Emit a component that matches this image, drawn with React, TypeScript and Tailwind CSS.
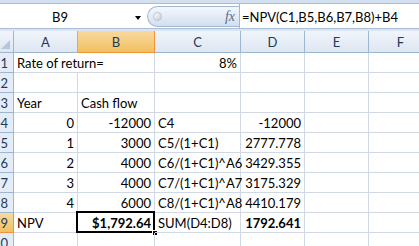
import type { ReactNode } from "react";

type CellDef = {
  text?: ReactNode;
  right?: boolean;
  bold?: boolean;
  span?: boolean;
  selected?: boolean;
};

const COLS = ["A", "B", "C", "D", "E", "F"];

const ROWS: { n: number; cells: CellDef[] }[] = [
  { n: 1, cells: [{ text: "Rate of return=", span: true }, { text: "8%", right: true }, {}, {}, {}] },
  { n: 2, cells: [{}, {}, {}, {}, {}, {}] },
  { n: 3, cells: [{ text: "Year" }, { text: "Cash flow" }, {}, {}, {}, {}] },
  { n: 4, cells: [{ text: "0", right: true }, { text: "-12000", right: true }, { text: "C4" }, { text: "-12000", right: true }, {}, {}] },
  { n: 5, cells: [{ text: "1", right: true }, { text: "3000", right: true }, { text: "C5/(1+C1)" }, { text: "2777.778", right: true }, {}, {}] },
  { n: 6, cells: [{ text: "2", right: true }, { text: "4000", right: true }, { text: "C6/(1+C1)^A6" }, { text: "3429.355", right: true }, {}, {}] },
  { n: 7, cells: [{ text: "3", right: true }, { text: "4000", right: true }, { text: "C7/(1+C1)^A7" }, { text: "3175.329", right: true }, {}, {}] },
  { n: 8, cells: [{ text: "4", right: true }, { text: "6000", right: true }, { text: "C8/(1+C1)^A8" }, { text: "4410.179", right: true }, {}, {}] },
  {
    n: 9,
    cells: [
      { text: "NPV" },
      { text: "$1,792.64", right: true, bold: true, selected: true },
      { text: "SUM(D4:D8)" },
      { text: "1792.641", right: true, bold: true },
      {},
      {},
    ],
  },
  { n: 10, cells: [{}, {}, {}, {}, {}, {}] },
];

function Cell({ c }: { c: CellDef }) {
  return (
    <div
      className={`relative h-[20px] whitespace-nowrap border-b border-r border-[#d0d7e5] px-[3px] text-[13px] leading-[20px] text-black ${
        c.span ? "col-span-2" : ""
      } ${c.right ? "text-right" : "text-left"} ${c.bold ? "font-bold" : ""}`}
    >
      {c.text}
      {c.selected && (
        <>
          <div className="pointer-events-none absolute -left-[2px] -top-[2px] bottom-[-1px] right-[-1px] border-2 border-black" />
          <div className="absolute -bottom-[4px] -right-[4px] h-[6px] w-[6px] border border-white bg-black" />
        </>
      )}
    </div>
  );
}

function RowHeader({ n, active }: { n: number; active: boolean }) {
  return (
    <div
      className={`flex h-[20px] justify-end overflow-hidden border-b border-r pr-[5px] text-[13px] leading-[20px] text-[#1e395b] ${
        active
          ? "border-[#f29436] bg-gradient-to-b from-[#f9d99f] to-[#f1c15f]"
          : "border-[#9eb6ce] bg-[#e4ecf7]"
      }`}
    >
      <span className="whitespace-nowrap">{n}</span>
    </div>
  );
}

export default function App() {
  return (
    <div
      className="h-[246px] w-[419px] overflow-hidden bg-white"
      style={{ fontFamily: "Lato, 'Liberation Sans', sans-serif" }}
    >
      {/* formula bar */}
      <div className="h-[31px] bg-[#dbe5f1]">
        <div className="h-[3px] bg-[#d3e0f0]" />
        <div className="flex h-[26px] border-y border-[#a9bdd6] bg-white">
          <div className="flex w-[147px] items-center pt-[3px]">
            <span className="ml-[52px] text-[13px] text-black">B9</span>
            <span className="ml-auto mr-[6px] h-0 w-0 border-x-[3px] border-t-[4px] border-x-transparent border-t-black" />
          </div>
          <div className="flex h-[21px] w-[92px] items-center self-center rounded-l-full border border-r-0 border-[#a3b7cf] bg-gradient-to-b from-[#f3f7fc] to-[#d2dff0]">
            <span className="ml-[5px] h-[9px] w-[9px] rounded-full border border-[#b9c3cf] bg-gradient-to-br from-white to-[#c6ccd4]" />
            <span
              className="ml-auto mr-[4px] text-[14px] italic text-[#5b6e88]"
              style={{ fontFamily: "'Liberation Serif', serif" }}
            >
              fx
            </span>
          </div>
          <div className="flex flex-1 items-center border-l border-[#a3b7cf] pl-[2px] pt-[3px] text-[13px] text-black">
            =NPV(C1,B5,B6,B7,B8)+B4
          </div>
        </div>
      </div>

      {/* sheet */}
      <div className="grid grid-cols-[14px_64px_77px_86px_64px_64px_64px]">
        <div className="relative h-[22px] border-b border-r border-[#9eb6ce] bg-gradient-to-b from-[#f1f5fb] to-[#dde6f2]">
          <span className="absolute bottom-[3px] right-[3px] h-0 w-0 border-b-[9px] border-l-[9px] border-b-[#b6c6da] border-l-transparent" />
        </div>
        {COLS.map((col) => (
          <div
            key={col}
            className={`h-[22px] border-b border-r text-center text-[13px] leading-[22px] text-[#1e395b] ${
              col === "B"
                ? "border-[#f29436] bg-gradient-to-b from-[#f9d99f] to-[#f1c15f]"
                : "border-[#9eb6ce] bg-gradient-to-b from-[#f1f5fb] to-[#dde6f2]"
            }`}
          >
            {col}
          </div>
        ))}
        {ROWS.map((row) => (
          <Row key={row.n} n={row.n} cells={row.cells} />
        ))}
      </div>
    </div>
  );
}

function Row({ n, cells }: { n: number; cells: CellDef[] }) {
  return (
    <>
      <RowHeader n={n} active={n === 9} />
      {cells.map((c, i) => (
        <Cell key={i} c={c} />
      ))}
    </>
  );
}
